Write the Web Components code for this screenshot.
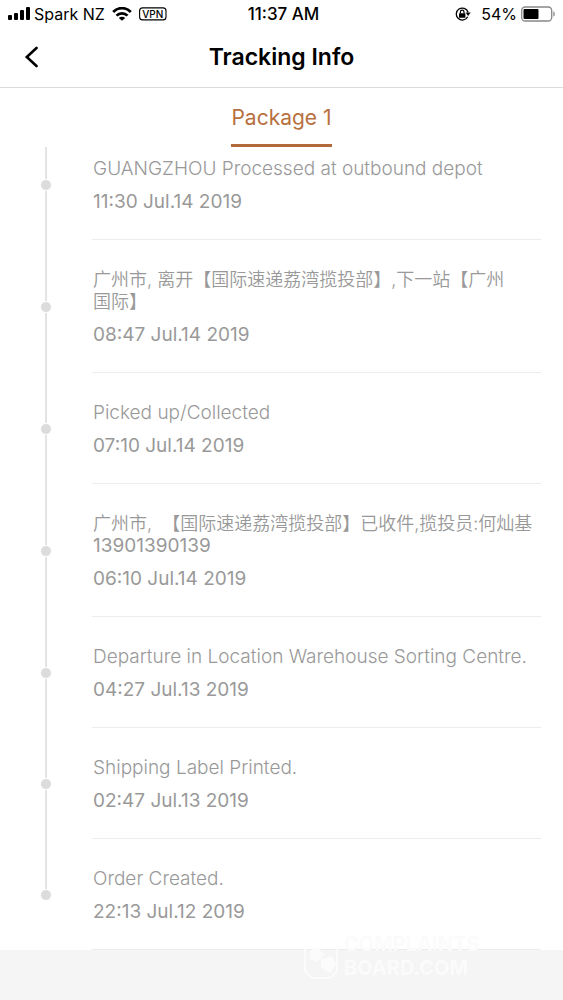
<!DOCTYPE html>
<html lang="en">
<head>
<meta charset="utf-8">
<meta name="viewport" content="width=device-width, initial-scale=1">
<title>Tracking Info</title>
<style>
  html { background: #f5f5f5; }
  body { margin: 0; font-family: Inter, "Noto Sans CJK SC", sans-serif; color: #000; }
</style>
</head>
<body>
<tracking-page></tracking-page>

<script>
class BaseElement extends HTMLElement {
  constructor() {
    super();
    this.attachShadow({ mode: 'open' }).innerHTML = this.constructor.markup;
  }
}

class StatusBar extends BaseElement {
  static markup = `
    <style>
      :host { display: grid; grid-template-columns: 1fr auto 1fr; align-items: center; height: 28px; padding: 0 8px; font-size: 16px; line-height: 20px; }
      .side { display: flex; align-items: center; gap: 4px; }
      .right { justify-content: flex-end; }
      .time { padding-left: 4px; font-size: 17px; font-weight: 500; }
      .wifi { margin: 0 3px; }
      .lock { margin-right: 6px; }
      svg { display: block; }
    </style>
    <div class="side">
      <svg width="22" height="14" viewBox="0 0 22 14" aria-hidden="true">
        <rect x="0" y="8" width="4" height="5" rx="1"/><rect x="6" y="6" width="4" height="7" rx="1"/>
        <rect x="12" y="3" width="4" height="10" rx="1"/><rect x="18" y="0" width="4" height="13" rx="1"/>
      </svg>
      <span>Spark NZ</span>
      <svg class="wifi" width="20" height="14" viewBox="0 0 20 14" fill="none" stroke="#000" stroke-width="2.8" aria-hidden="true">
        <path d="M1.2 5C6-.1 14-.1 18.800 5"/><path d="M4.500 8.600c3-3.100 8-3.100 11 0"/>
        <path d="M10 13.800 6.800 10.900c1.700-1.500 4.700-1.500 6.400 0z" fill="#000" stroke="none"/>
      </svg>
      <svg width="28" height="14" viewBox="0 0 28 14" role="img" aria-label="VPN">
        <rect x=".6" y=".9" width="26.400" height="12" rx="3" fill="none" stroke="#000" stroke-width="1.100"/>
        <text x="13.800" y="10.500" text-anchor="middle" font-size="10" font-weight="500">VPN</text>
      </svg>
    </div>
    <span class="time">11:37 AM</span>
    <div class="side right">
      <svg class="lock" width="16" height="14" viewBox="0 0 16 14" aria-hidden="true">
        <path d="M12.700 9.700A6 6 0 1 1 13 5.200" fill="none" stroke="#000" stroke-width="1.300"/>
        <path d="M10.600 5.600h5L13.100 9z"/>
        <rect x="4" y="6.200" width="6.400" height="4.600" rx=".6"/>
        <path d="M5.400 6.500V5a1.800 1.800 0 0 1 3.600 0v1.500" fill="none" stroke="#000" stroke-width="1.200"/>
      </svg>
      <span>54%</span>
      <svg width="34" height="16" viewBox="0 0 34 16" aria-hidden="true">
        <rect x=".7" y="1" width="30" height="14" rx="3.500" fill="none" stroke="#888" stroke-width="1.300"/>
        <rect x="2.500" y="3" width="15" height="10" rx="1"/>
        <path d="M32.300 5.300c2 .8 2 4.600 0 5.400z" fill="#888"/>
      </svg>
    </div>`;
}
customElements.define('status-bar', StatusBar);

class NavBar extends BaseElement {
  static markup = `
    <style>
      :host { display: grid; grid-template-columns: 64px 1fr 64px; align-items: start; height: 59px; border-bottom: 1px solid #dcdcdc; }
      button { display: flex; align-items: center; width: 64px; height: 58px; padding: 0 24px; border: 0; background: none; }
      h1 { margin: 14px 0 0; text-align: center; font-size: 23px; line-height: 30px; font-weight: 600; }
    </style>
    <button type="button" aria-label="Back">
      <svg width="14" height="22" viewBox="0 0 14 22" fill="none" stroke="#000" stroke-width="2.600" stroke-linecap="round"><path d="M12.500 2 2.800 11l9.700 9"/></svg>
    </button>
    <h1><slot></slot></h1>`;
}
customElements.define('nav-bar', NavBar);

class PackageTabs extends BaseElement {
  static markup = `
    <style>
      :host { display: flex; justify-content: center; position: relative; z-index: 1; background: #fff; }
      button { height: 59px; padding: 4px 0 0; border: 0; border-bottom: 3px solid #b26a3d; background: none; font: 400 21px/28px Inter, sans-serif; color: #b8703f; }
    </style>
    <button type="button" aria-pressed="true"><slot></slot></button>`;
}
customElements.define('package-tabs', PackageTabs);

class TrackingEvent extends BaseElement {
  static markup = `
    <style>
      :host { display: grid; grid-template-columns: 92px 1fr; padding-right: 22px; font-size: 19px; line-height: 22px; color: #999; }
      .rail { display: grid; grid-template-rows: 1fr 12px 1fr; justify-items: center; }
      .line { width: 2px; background: #e4e4e4; }
      .dot { width: 10px; height: 10px; border: 1px solid #fff; border-radius: 50%; background: #dcdcdc; }
      :host(:last-of-type) .line:last-child { background: none; }
      .body { padding: 29px 0 26px 1px; border-bottom: 1px solid #ececec; white-space: nowrap; }
      .text { margin: 0 0 11px; font-weight: 350; }
      .date { display: block; }
      ::slotted([lang="zh"]) { display: block; font-size: 18px; }
      ::slotted(.phone) { display: block; font-weight: 400; }
    </style>
    <div class="rail"><span class="line"></span><span class="dot"></span><span class="line"></span></div>
    <div class="body"><div class="text"><slot></slot></div><span class="date"><slot name="date"></slot></span></div>`;
}
customElements.define('tracking-event', TrackingEvent);

class WaterMark extends BaseElement {
  static markup = `
    <style>
      :host { display: flex; align-items: flex-end; gap: 6px; position: relative; margin-top: -18px; padding-left: 54%; color: #fbfbfb; }
      .words { font-size: 20px; line-height: 24px; font-weight: 700; }
      .words span { display: block; }
    </style>
    <svg width="34" height="32" viewBox="0 0 34 32" fill="none" stroke="#fbfbfb" stroke-width="2" aria-hidden="true"><path d="M1 0v23l7 7h18l7-7V0"/><path d="M7 3 13 0l6 7-6 6-6-3zM18 12l9-3 4 7-5 8-8-5z" fill="#fbfbfb"/></svg>
    <div class="words"><span>COMPLAINTS</span><span>BOARD.COM</span></div>`;
}
customElements.define('water-mark', WaterMark);

class TrackingPage extends BaseElement {
  static markup = `
    <style>
      :host { display: block; }
      header, main { background: #fff; }
      .list { margin-top: -18px; }
    </style>
    <header><status-bar></status-bar><nav-bar>Tracking Info</nav-bar></header>
    <main>
      <package-tabs>Package 1</package-tabs>
      <div class="list">
        <tracking-event>GUANGZHOU Processed at outbound depot<time slot="date">11:30 Jul.14 2019</time></tracking-event>
        <tracking-event><span lang="zh">广州市, 离开【国际速递荔湾揽投部】,下一站【广州<br>国际】</span><time slot="date">08:47 Jul.14 2019</time></tracking-event>
        <tracking-event>Picked up/Collected<time slot="date">07:10 Jul.14 2019</time></tracking-event>
        <tracking-event><span lang="zh">广州市,&nbsp; 【国际速递荔湾揽投部】已收件,揽投员:何灿基</span><span class="phone">13901390139</span><time slot="date">06:10 Jul.14 2019</time></tracking-event>
        <tracking-event>Departure in Location Warehouse Sorting Centre.<time slot="date">04:27 Jul.13 2019</time></tracking-event>
        <tracking-event>Shipping Label Printed.<time slot="date">02:47 Jul.13 2019</time></tracking-event>
        <tracking-event>Order Created.<time slot="date">22:13 Jul.12 2019</time></tracking-event>
      </div>
    </main>
    <water-mark></water-mark>`;
}
customElements.define('tracking-page', TrackingPage);
</script>
</body>
</html>
